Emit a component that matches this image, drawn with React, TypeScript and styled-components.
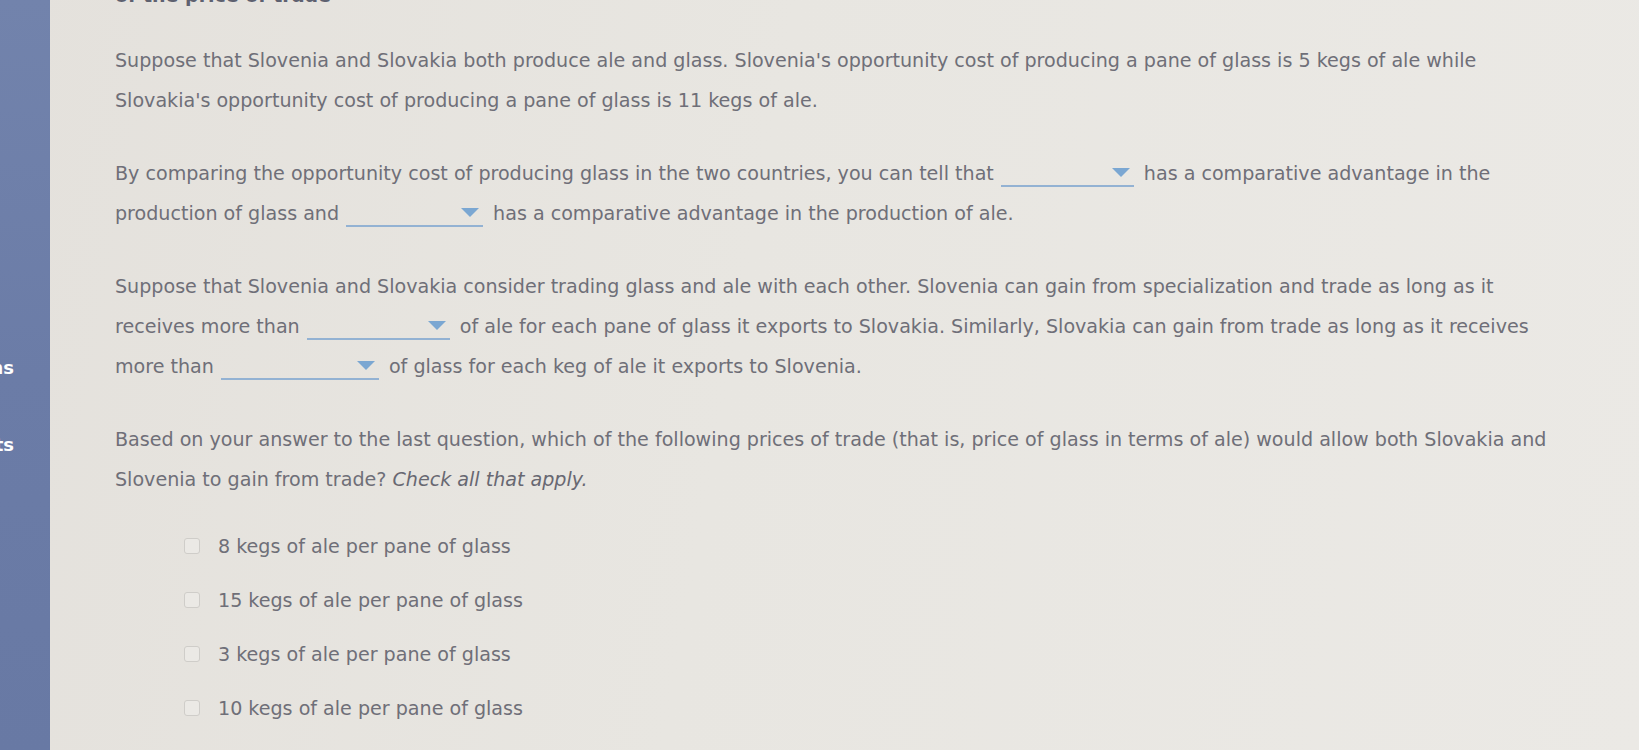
import React from "react";
import styled, { createGlobalStyle } from "styled-components";

const GlobalStyle = createGlobalStyle`
  html, body {
    margin: 0;
    padding: 0;
    height: 100%;
    overflow: hidden;
  }
  body {
    background: #e6e4df;
    font-family: "DejaVu Sans", Verdana, sans-serif;
  }
`;

const Page = styled.div`
  display: flex;
  width: 1639px;
  height: 750px;
  overflow: hidden;
  background: linear-gradient(100deg, #e4e1dc 0%, #e8e6e1 45%, #ebe9e5 100%);
`;

const Sidebar = styled.div`
  width: 50px;
  flex-shrink: 0;
  background: linear-gradient(180deg, #7283ac 0%, #6b7ca7 50%, #6879a4 100%);
  display: flex;
  flex-direction: column;
  padding-top: 358px;
  gap: 57px;
`;

const SideItem = styled.div`
  display: flex;
  justify-content: flex-end;
  width: 14px;
  overflow: hidden;
  white-space: nowrap;
  color: #ffffff;
  font-weight: bold;
  font-size: 18px;
  line-height: 20px;
`;

const Main = styled.div`
  flex: 1;
  padding: 0 0 0 65px;
  color: #6f6f78;
  font-size: 19.1px;
`;

const Heading = styled.div`
  margin-top: -15px;
  height: 20px;
  font-size: 19px;
  font-weight: bold;
  color: #5e6170;
  line-height: 20px;
`;

const Para = styled.p<{ first?: boolean }>`
  margin: ${(p) => (p.first ? "36px" : "0")} 0 34px;
  line-height: 39.6px;
  white-space: nowrap;
`;

const Em = styled.span`
  font-style: italic;
  color: #686872;
`;

const Select = styled.span<{ w: number }>`
  display: inline-block;
  overflow: hidden;
  width: ${(p) => p.w}px;
  height: 22px;
  margin: 0 10px 0 7px;
  border-bottom: 2px solid #93b2d3;
  vertical-align: -7px;
  box-sizing: border-box;
`;

const Caret = styled.span`
  display: block;
  width: 0;
  height: 0;
  margin: 3px 4px 0 auto;
  border-left: 9px solid transparent;
  border-right: 9px solid transparent;
  border-top: 9px solid #7ba7d2;
`;

const Options = styled.div`
  display: flex;
  flex-direction: column;
  gap: 14px;
  padding-left: 69px;
  margin-top: -7px;
`;

const Option = styled.label`
  display: flex;
  align-items: center;
  gap: 18px;
  height: 40px;
`;

const Box = styled.span`
  width: 14px;
  height: 14px;
  border: 1px solid #cfcdc9;
  border-radius: 3px;
  background: #ebe9e5;
`;

function Dropdown({ w }: { w: number }) {
  return (
    <Select w={w}>
      <Caret />
    </Select>
  );
}

const options = [
  "8 kegs of ale per pane of glass",
  "15 kegs of ale per pane of glass",
  "3 kegs of ale per pane of glass",
  "10 kegs of ale per pane of glass",
];

export default function App() {
  return (
    <>
      <GlobalStyle />
      <Page>
        <Sidebar>
          <SideItem>Problems</SideItem>
          <SideItem>Hints</SideItem>
        </Sidebar>
        <Main>
          <Heading>of the price of trade</Heading>
          <Para first>
            Suppose that Slovenia and Slovakia both produce ale and glass. Slovenia's opportunity cost of producing a pane of glass is 5 kegs of ale while
            <br />
            Slovakia's opportunity cost of producing a pane of glass is 11 kegs of ale.
          </Para>
          <Para>
            By comparing the opportunity cost of producing glass in the two countries, you can tell that
            <Dropdown w={133} />
            has a comparative advantage in the
            <br />
            production of glass and
            <Dropdown w={137} />
            has a comparative advantage in the production of ale.
          </Para>
          <Para>
            Suppose that Slovenia and Slovakia consider trading glass and ale with each other. Slovenia can gain from specialization and trade as long as it
            <br />
            receives more than
            <Dropdown w={143} />
            of ale for each pane of glass it exports to Slovakia. Similarly, Slovakia can gain from trade as long as it receives
            <br />
            more than
            <Dropdown w={158} />
            of glass for each keg of ale it exports to Slovenia.
          </Para>
          <Para>
            Based on your answer to the last question, which of the following prices of trade (that is, price of glass in terms of ale) would allow both Slovakia and
            <br />
            Slovenia to gain from trade? <Em>Check all that apply.</Em>
          </Para>
          <Options>
            {options.map((o) => (
              <Option key={o}>
                <Box />
                {o}
              </Option>
            ))}
          </Options>
        </Main>
      </Page>
    </>
  );
}
